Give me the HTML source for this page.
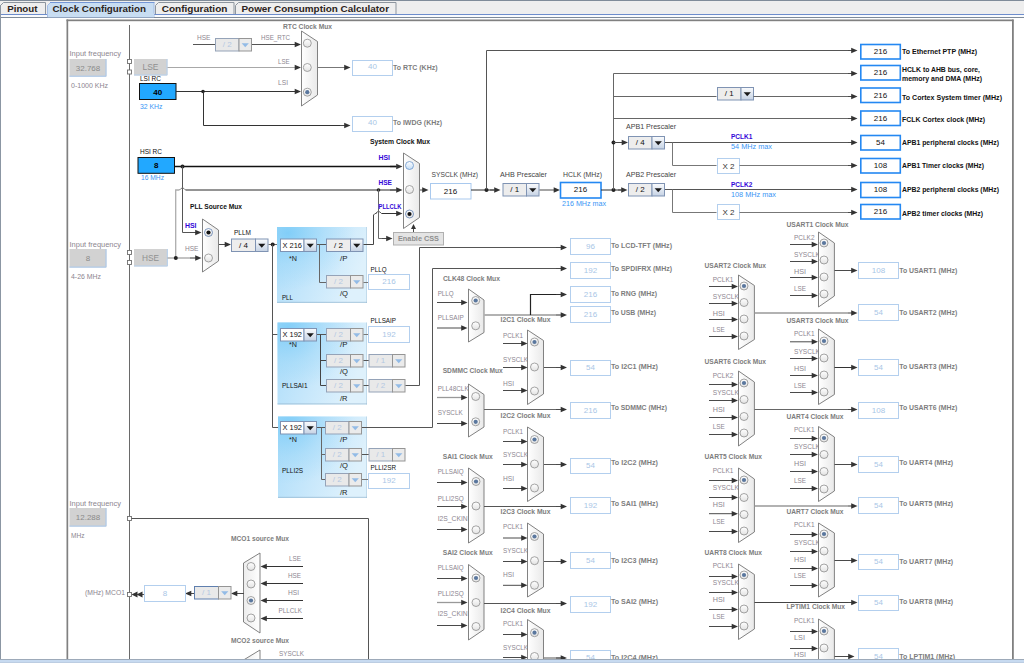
<!DOCTYPE html>
<html><head><meta charset="utf-8"><title>Clock Configuration</title>
<style>
html,body{margin:0;padding:0;background:#fff;overflow:hidden}
body{width:1024px;height:663px;font-family:"Liberation Sans",sans-serif}
svg{display:block;font-family:"Liberation Sans",sans-serif}
</style></head><body>
<svg width="1024" height="663" viewBox="0 0 1024 663">
<defs>
<linearGradient id="mg" x1="0" y1="0" x2="1" y2="0"><stop offset="0" stop-color="#ffffff"/><stop offset="1" stop-color="#e9e9e9"/></linearGradient>
<linearGradient id="mg2" x1="1" y1="0" x2="0" y2="0"><stop offset="0" stop-color="#ffffff"/><stop offset="1" stop-color="#ececec"/></linearGradient>
<linearGradient id="bg" x1="0" y1="0" x2="0" y2="1"><stop offset="0" stop-color="#fbfcfd"/><stop offset="1" stop-color="#c5d2e4"/></linearGradient>
<linearGradient id="rg" x1="0" y1="0" x2="0" y2="1"><stop offset="0" stop-color="#ffffff"/><stop offset="1" stop-color="#e2e2e2"/></linearGradient>
<linearGradient id="rgh" x1="0" y1="0" x2="0" y2="1"><stop offset="0" stop-color="#ffffff"/><stop offset="1" stop-color="#c2dcf6"/></linearGradient>
<linearGradient id="pg" x1="0" y1="0" x2="1" y2="0.35"><stop offset="0" stop-color="#aadcf9"/><stop offset="0.5" stop-color="#c4e6fb"/><stop offset="1" stop-color="#def1fc"/></linearGradient>
<radialGradient id="pr" cx="0.12" cy="0.08" r="0.75"><stop offset="0" stop-color="#7fcdf8" stop-opacity="0.95"/><stop offset="0.55" stop-color="#8fd3f8" stop-opacity="0.35"/><stop offset="1" stop-color="#8fd3f8" stop-opacity="0"/></radialGradient>
</defs>
<rect x="0" y="0" width="1024" height="663" fill="#fff" />
<rect x="0" y="0" width="1024" height="15" fill="#eeeeee" />
<rect x="0" y="0" width="1024" height="1" fill="#7f8b99" />
<rect x="0" y="14" width="1024" height="1" fill="#6d8dcc" />
<rect x="0" y="15" width="1024" height="2" fill="#f9fbfe" />
<rect x="0" y="17" width="1024" height="1" fill="#7f8b99" />
<path d="M0.5,14 L0.5,5.5 L3.5,2.5 L45.5,2.5 L45.5,14" fill="#eeeeee" stroke="#8d959e" stroke-width="1"/>
<text x="7.2" y="11.6" font-size="9.2" fill="#2b2320" font-weight="bold" textLength="30.3" lengthAdjust="spacingAndGlyphs" >Pinout</text>
<path d="M155.5,14 L155.5,5.5 L158.5,2.5 L234,2.5 L234,14" fill="#eeeeee" stroke="#8d959e" stroke-width="1"/>
<text x="161.7" y="11.6" font-size="9.2" fill="#2b2320" font-weight="bold" textLength="65.7" lengthAdjust="spacingAndGlyphs" >Configuration</text>
<path d="M235.5,14 L235.5,5.5 L238.5,2.5 L396,2.5 L396,14" fill="#eeeeee" stroke="#8d959e" stroke-width="1"/>
<text x="241.5" y="11.6" font-size="9.2" fill="#2b2320" font-weight="bold" textLength="147.5" lengthAdjust="spacingAndGlyphs" >Power Consumption Calculator</text>
<path d="M47.5,17 L47.5,5.5 L50.5,2.5 L154,2.5 L154,17 Z" fill="#c8ddf2" stroke="#a4bde6" stroke-width="1"/>
<rect x="48" y="13.5" width="106" height="3.5" fill="#c8ddf2" />
<rect x="50" y="2" width="104.5" height="1" fill="#7396d6" />
<text x="52.5" y="11.6" font-size="9.2" fill="#2b2320" font-weight="bold" textLength="93.5" lengthAdjust="spacingAndGlyphs" >Clock Configuration</text>
<rect x="0" y="5" width="1" height="658" fill="#8b96a3" />
<rect x="66.5" y="19.5" width="947" height="1.7" fill="#808080" />
<rect x="66.5" y="19.5" width="1.7" height="640" fill="#808080" />
<rect x="1012" y="19.5" width="1.8" height="640" fill="#808080" />
<rect x="0" y="659" width="1024" height="4" fill="#c7daf0" />
<rect x="0" y="659" width="1024" height="1" fill="#9daab9" />
<rect x="0" y="662" width="1024" height="1" fill="#bccde2" />
<polyline points="129.5,25 129.5,659" fill="none" stroke="#6a6a6a" stroke-width="1" />
<text x="69.5" y="55.5" font-size="8" fill="#8c8690" textLength="51.5" lengthAdjust="spacingAndGlyphs" >Input frequency</text>
<rect x="69.5" y="59" width="37" height="17.7" fill="#d2d2d2" />
<polyline points="106,59 106,76.2 69.5,76.2" fill="none" stroke="#a9c9ee" stroke-width="1" />
<text x="88" y="70.55" font-size="8" fill="#8a8a8a" text-anchor="middle" >32.768</text>
<text x="71" y="88" font-size="8" fill="#8c8690" textLength="37" lengthAdjust="spacingAndGlyphs" >0-1000 KHz</text>
<rect x="127.5" y="59.5" width="4" height="4" fill="#fff" stroke="#707070" stroke-width="0.9" />
<rect x="127.5" y="70" width="4" height="4" fill="#fff" stroke="#707070" stroke-width="0.9" />
<rect x="134" y="59" width="33.5" height="16.5" fill="#d2d2d2" />
<polyline points="167,59 167,75 134,75" fill="none" stroke="#b5d0ee" stroke-width="1" />
<text x="150.5" y="69.8" font-size="9.5" fill="#909090" text-anchor="middle" textLength="16" lengthAdjust="spacingAndGlyphs" >LSE</text>
<polyline points="167.5,67.5 296,67.5" fill="none" stroke="#a8a8a8" stroke-width="1" />
<text x="69.5" y="247" font-size="8" fill="#8c8690" textLength="51.5" lengthAdjust="spacingAndGlyphs" >Input frequency</text>
<rect x="69.5" y="249" width="37" height="18.6" fill="#d2d2d2" />
<polyline points="106,249 106,267.1 69.5,267.1" fill="none" stroke="#a9c9ee" stroke-width="1" />
<text x="88" y="261" font-size="8" fill="#8a8a8a" text-anchor="middle" >8</text>
<text x="71" y="279" font-size="8" fill="#8c8690" textLength="30" lengthAdjust="spacingAndGlyphs" >4-26 MHz</text>
<rect x="127.5" y="250.5" width="4" height="4" fill="#fff" stroke="#707070" stroke-width="0.9" />
<rect x="127.5" y="260.5" width="4" height="4" fill="#fff" stroke="#707070" stroke-width="0.9" />
<rect x="134" y="249" width="33.8" height="17.4" fill="#d2d2d2" />
<polyline points="167.3,249 167.3,266 134,266" fill="none" stroke="#b5d0ee" stroke-width="1" />
<text x="150.5" y="261" font-size="9.5" fill="#909090" text-anchor="middle" textLength="17" lengthAdjust="spacingAndGlyphs" >HSE</text>
<text x="69.5" y="505.5" font-size="8" fill="#8c8690" textLength="51.5" lengthAdjust="spacingAndGlyphs" >Input frequency</text>
<rect x="69.5" y="508" width="37" height="18.6" fill="#d2d2d2" />
<polyline points="106,508 106,526.1 69.5,526.1" fill="none" stroke="#a9c9ee" stroke-width="1" />
<text x="88" y="520" font-size="8" fill="#8a8a8a" text-anchor="middle" >12.288</text>
<text x="71" y="538" font-size="8" fill="#8c8690" textLength="13.5" lengthAdjust="spacingAndGlyphs" >MHz</text>
<rect x="127.5" y="516.5" width="4" height="4" fill="#fff" stroke="#707070" stroke-width="0.9" />
<text x="140" y="80.5" font-size="7.5" fill="#111" textLength="21" lengthAdjust="spacingAndGlyphs" >LSI RC</text>
<rect x="139.5" y="83.5" width="36.5" height="16" fill="#22a8ff" stroke="#111" stroke-width="1" />
<text x="157.75" y="94.5" font-size="8" fill="#000" font-weight="bold" text-anchor="middle" >40</text>
<text x="140" y="108.7" font-size="8" fill="#3a96f5" textLength="22.5" lengthAdjust="spacingAndGlyphs" >32 KHz</text>
<polyline points="176,91.5 296,91.5" fill="none" stroke="#333" stroke-width="1" />
<circle cx="203" cy="91.5" r="1.8" fill="#222"/>
<polyline points="203.5,91.5 203.5,125.5 345,125.5" fill="none" stroke="#333" stroke-width="1" />
<polyline points="340,125.5 346.5,125.5" fill="none" stroke="#4a4a4a" stroke-width="1" />
<polygon points="350.5,125.5 344.2,122.8 344.2,128.2" fill="#333"/>
<rect x="352.5" y="116.5" width="40" height="15" fill="#fff" stroke="#b3cfee" stroke-width="1" />
<text x="372.5" y="125.3" font-size="8" fill="#a9c6e6" text-anchor="middle" >40</text>
<text x="393" y="125.2" font-size="8" fill="#7d7d7d" font-weight="bold" textLength="49" lengthAdjust="spacingAndGlyphs" >To IWDG (KHz)</text>
<text x="197" y="39.5" font-size="8" fill="#8c8690" textLength="13.5" lengthAdjust="spacingAndGlyphs" >HSE</text>
<polyline points="193,44.5 215,44.5" fill="none" stroke="#555" stroke-width="1" />
<rect x="215.5" y="38.5" width="23.5" height="12.5" fill="#e9e9e9" stroke="#95a3b8" stroke-width="1" />
<rect x="239" y="38.5" width="12.5" height="12.5" fill="#ebebeb" stroke="#959595" stroke-width="1" />
<text x="227.25" y="47.05" font-size="8" fill="#b4c8e2" text-anchor="middle" >/ 2</text>
<polygon points="241.65,43.35 248.85,43.35 245.25,47.35" fill="#93bbe6"/>
<polyline points="252,44.5 296,44.5" fill="none" stroke="#555" stroke-width="1" />
<text x="261" y="39.5" font-size="8" fill="#8c8690" textLength="29" lengthAdjust="spacingAndGlyphs" >HSE_RTC</text>
<text x="278" y="63.5" font-size="8" fill="#8c8690" textLength="11.5" lengthAdjust="spacingAndGlyphs" >LSE</text>
<text x="278" y="84.5" font-size="8" fill="#8c8690" textLength="10" lengthAdjust="spacingAndGlyphs" >LSI</text>
<text x="283" y="28.5" font-size="8" fill="#7d7d7d" font-weight="bold" textLength="49" lengthAdjust="spacingAndGlyphs" >RTC Clock Mux</text>
<polyline points="290,44.5 297,44.5" fill="none" stroke="#4a4a4a" stroke-width="1" />
<polygon points="301,44.5 294.7,41.8 294.7,47.2" fill="#333"/>
<polyline points="290,67.5 297,67.5" fill="none" stroke="#a8a8a8" stroke-width="1" />
<polygon points="301,67.5 294.7,64.8 294.7,70.2" fill="#333"/>
<polyline points="290,91.5 297,91.5" fill="none" stroke="#333" stroke-width="1" />
<polygon points="301,91.5 294.7,88.8 294.7,94.2" fill="#333"/>
<polygon points="301.5,31 317.5,41.5 317.5,95 301.5,106" fill="url(#mg)" stroke="#747474" stroke-width="0.9"/>
<circle cx="307.3" cy="43.2" r="4" fill="url(#rg)" stroke="#8e8e8e" stroke-width="0.8"/>
<circle cx="307.3" cy="67.5" r="4" fill="url(#rg)" stroke="#8e8e8e" stroke-width="0.8"/>
<circle cx="307.3" cy="92.2" r="4" fill="url(#rg)" stroke="#8e8e8e" stroke-width="0.8"/>
<circle cx="307.3" cy="92.2" r="2.1" fill="#5a779e"/>
<polyline points="318,67.5 346.5,67.5" fill="none" stroke="#777" stroke-width="1" />
<polygon points="350.5,67.5 344.2,64.8 344.2,70.2" fill="#333"/>
<rect x="352.5" y="60.5" width="40" height="15" fill="#fff" stroke="#b3cfee" stroke-width="1" />
<text x="372.5" y="69.4" font-size="8" fill="#a9c6e6" text-anchor="middle" >40</text>
<text x="393" y="70" font-size="8" fill="#7d7d7d" font-weight="bold" textLength="44.5" lengthAdjust="spacingAndGlyphs" >To RTC (KHz)</text>
<text x="140" y="153.5" font-size="7.5" fill="#111" textLength="22" lengthAdjust="spacingAndGlyphs" >HSI RC</text>
<rect x="138" y="157.5" width="36.5" height="15.8" fill="#22a8ff" stroke="#111" stroke-width="1" />
<text x="156.25" y="168.4" font-size="8" fill="#000" font-weight="bold" text-anchor="middle" >8</text>
<text x="141" y="179.5" font-size="8" fill="#3a96f5" textLength="23" lengthAdjust="spacingAndGlyphs" >16 MHz</text>
<polyline points="175,166.5 396,166.5" fill="none" stroke="#111" stroke-width="1.3" />
<circle cx="182.5" cy="166.5" r="2" fill="#222"/>
<polyline points="390,166.5 398.5,166.5" fill="none" stroke="#111" stroke-width="1.3" />
<polygon points="402.5,166.5 396.2,163.8 396.2,169.2" fill="#333"/>
<polyline points="182.5,166.5 182.5,232.5 196,232.5" fill="none" stroke="#555" stroke-width="1" />
<polyline points="190,232.5 197.5,232.5" fill="none" stroke="#4a4a4a" stroke-width="1" />
<polygon points="201.5,232.5 195.2,229.8 195.2,235.2" fill="#333"/>
<polyline points="175.7,258 175.7,190 179.5,190" fill="none" stroke="#adadad" stroke-width="1.3" />
<path d="M179.5,190 Q182.5,186 185.5,190" fill="none" stroke="#777" stroke-width="1"/>
<polyline points="185.5,190 396,190" fill="none" stroke="#2a2a2a" stroke-width="1" />
<circle cx="378.5" cy="190" r="1.8" fill="#222"/>
<polyline points="390,190 398.5,190" fill="none" stroke="#4a4a4a" stroke-width="1" />
<polygon points="402.5,190 396.2,187.3 396.2,192.7" fill="#333"/>
<polyline points="167.5,258 196,258" fill="none" stroke="#aaa" stroke-width="1.4" />
<circle cx="175.8" cy="258" r="2" fill="#222"/>
<polyline points="190,258 197.5,258" fill="none" stroke="#888" stroke-width="1.4" />
<polygon points="201.5,258 195.2,255.3 195.2,260.7" fill="#333"/>
<text x="190" y="209" font-size="7.5" fill="#111" font-weight="bold" textLength="52" lengthAdjust="spacingAndGlyphs" >PLL Source Mux</text>
<text x="185" y="227.5" font-size="8" fill="#3306d8" font-weight="bold" textLength="11.5" lengthAdjust="spacingAndGlyphs" >HSI</text>
<text x="185" y="251" font-size="8" fill="#8c8690" textLength="13.5" lengthAdjust="spacingAndGlyphs" >HSE</text>
<polygon points="202.5,219 218.5,230 218.5,261 202.5,272" fill="url(#mg)" stroke="#747474" stroke-width="0.9"/>
<circle cx="208.5" cy="232.5" r="4" fill="url(#rg)" stroke="#5f7fae" stroke-width="0.8"/>
<circle cx="208.5" cy="232.5" r="2.1" fill="#111"/>
<circle cx="208.5" cy="258" r="4" fill="url(#rg)" stroke="#8e8e8e" stroke-width="0.8"/>
<polyline points="219,244.5 227,244.5" fill="none" stroke="#4a4a4a" stroke-width="1" />
<polygon points="231,244.5 224.7,241.8 224.7,247.2" fill="#333"/>
<text x="234" y="235" font-size="7.5" fill="#111" textLength="17" lengthAdjust="spacingAndGlyphs" >PLLM</text>
<rect x="231.5" y="239" width="24" height="12.5" fill="#ededed" stroke="#7f93b3" stroke-width="1" />
<rect x="255.5" y="239" width="12.5" height="12.5" fill="url(#bg)" stroke="#7f93b3" stroke-width="1" />
<text x="243.5" y="247.55" font-size="8" fill="#111" text-anchor="middle" >/ 4</text>
<polygon points="258.15,243.85 265.35,243.85 261.75,247.85" fill="#1a1a1a"/>
<polyline points="268.5,244.5 280,244.5" fill="none" stroke="#666" stroke-width="1" />
<circle cx="272.7" cy="244.5" r="2" fill="#222"/>
<polyline points="272.5,244.5 272.5,427.5 280,427.5" fill="none" stroke="#555" stroke-width="1" />
<polyline points="272.5,334.5 280,334.5" fill="none" stroke="#555" stroke-width="1" />
<rect x="277" y="227" width="90" height="76" fill="url(#pg)" />
<rect x="277" y="227" width="90" height="76" fill="url(#pr)" />
<rect x="277" y="301.8" width="90" height="1.2" fill="#8fb3cc" opacity="0.55"/>
<rect x="366" y="227" width="1" height="76" fill="#8fb3cc" opacity="0.35"/>
<rect x="280.5" y="239" width="23.5" height="12.5" fill="#ffffff" stroke="#7f93b3" stroke-width="1" />
<rect x="304" y="239" width="12.5" height="12.5" fill="url(#bg)" stroke="#7f93b3" stroke-width="1" />
<text x="292.25" y="247.55" font-size="8" fill="#111" text-anchor="middle" textLength="19.5" lengthAdjust="spacingAndGlyphs" >X 216</text>
<polygon points="306.65,243.85 313.85,243.85 310.25,247.85" fill="#1a1a1a"/>
<polyline points="317,244.5 326,244.5" fill="none" stroke="#555" stroke-width="1" />
<rect x="326.5" y="239" width="24" height="12.5" fill="#ededed" stroke="#7f93b3" stroke-width="1" />
<rect x="350.5" y="239" width="12.5" height="12.5" fill="url(#bg)" stroke="#7f93b3" stroke-width="1" />
<text x="338.5" y="247.55" font-size="8" fill="#111" text-anchor="middle" >/ 2</text>
<polygon points="353.15,243.85 360.35,243.85 356.75,247.85" fill="#1a1a1a"/>
<polyline points="319.5,244.5 319.5,282.5 326,282.5" fill="none" stroke="#666" stroke-width="1" />
<rect x="326.5" y="275.5" width="24" height="12.5" fill="#e9e9e9" stroke="#95a3b8" stroke-width="1" />
<rect x="350.5" y="275.5" width="12.5" height="12.5" fill="#ebebeb" stroke="#959595" stroke-width="1" />
<text x="338.5" y="284.05" font-size="8" fill="#b4c8e2" text-anchor="middle" >/ 2</text>
<polygon points="353.15,280.35 360.35,280.35 356.75,284.35" fill="#93bbe6"/>
<polyline points="363.5,282.5 369,282.5" fill="none" stroke="#777" stroke-width="1" />
<text x="289" y="260.5" font-size="7" fill="#222" textLength="8" lengthAdjust="spacingAndGlyphs" >*N</text>
<text x="340" y="260.5" font-size="7" fill="#222" textLength="7.5" lengthAdjust="spacingAndGlyphs" >/P</text>
<text x="340" y="296" font-size="7" fill="#222" textLength="8" lengthAdjust="spacingAndGlyphs" >/Q</text>
<text x="282" y="300" font-size="7.5" fill="#111" textLength="11" lengthAdjust="spacingAndGlyphs" >PLL</text>
<text x="370.5" y="272" font-size="7.5" fill="#111" textLength="16" lengthAdjust="spacingAndGlyphs" >PLLQ</text>
<rect x="368.5" y="274.5" width="41" height="15" fill="#fff" stroke="#b3cfee" stroke-width="1" />
<text x="389" y="284.2" font-size="8" fill="#a9c6e6" text-anchor="middle" >216</text>
<polyline points="363.5,244.5 373.5,244.5 373.5,215 375,213.5 376.5,213.5" fill="none" stroke="#444" stroke-width="1" />
<path d="M375.5,213.5 Q378.5,209.5 381.5,213.5" fill="none" stroke="#666" stroke-width="1"/>
<polyline points="381.5,213.5 396,213.5" fill="none" stroke="#333" stroke-width="1" />
<polyline points="390,213.5 398.5,213.5" fill="none" stroke="#333" stroke-width="1" />
<polygon points="402.5,213.5 396.2,210.8 396.2,216.2" fill="#333"/>
<polyline points="378.5,189.5 378.5,238.5 386,238.5" fill="none" stroke="#666" stroke-width="1" />
<polyline points="382,238.5 388.5,238.5" fill="none" stroke="#4a4a4a" stroke-width="1" />
<polygon points="392.5,238.5 386.2,235.8 386.2,241.2" fill="#333"/>
<rect x="393.5" y="232.5" width="50" height="12.5" fill="#e4e4e4" stroke="#b0b0b0" stroke-width="1" />
<text x="418.5" y="241" font-size="8" fill="#8e8e8e" font-weight="bold" text-anchor="middle" textLength="41" lengthAdjust="spacingAndGlyphs" >Enable CSS</text>
<polyline points="413.5,232 413.5,227" fill="none" stroke="#4a4a4a" stroke-width="1" />
<polygon points="413.5,224 411,229 416,229" fill="#333"/>
<rect x="277.5" y="322.5" width="89.5" height="82" fill="url(#pg)" />
<rect x="277.5" y="322.5" width="89.5" height="82" fill="url(#pr)" />
<rect x="277.5" y="403.3" width="89.5" height="1.2" fill="#8fb3cc" opacity="0.55"/>
<rect x="366" y="322.5" width="1" height="82" fill="#8fb3cc" opacity="0.35"/>
<rect x="280.5" y="328.5" width="23.5" height="12.5" fill="#ffffff" stroke="#7f93b3" stroke-width="1" />
<rect x="304" y="328.5" width="12.5" height="12.5" fill="url(#bg)" stroke="#7f93b3" stroke-width="1" />
<text x="292.25" y="337.05" font-size="8" fill="#111" text-anchor="middle" textLength="19.5" lengthAdjust="spacingAndGlyphs" >X 192</text>
<polygon points="306.65,333.35 313.85,333.35 310.25,337.35" fill="#1a1a1a"/>
<polyline points="317,334.5 326,334.5" fill="none" stroke="#555" stroke-width="1" />
<rect x="326.5" y="328.5" width="24" height="12.5" fill="#e9e9e9" stroke="#95a3b8" stroke-width="1" />
<rect x="350.5" y="328.5" width="12.5" height="12.5" fill="#ebebeb" stroke="#959595" stroke-width="1" />
<text x="338.5" y="337.05" font-size="8" fill="#b4c8e2" text-anchor="middle" >/ 2</text>
<polygon points="353.15,333.35 360.35,333.35 356.75,337.35" fill="#93bbe6"/>
<polyline points="363.5,334.5 369,334.5" fill="none" stroke="#777" stroke-width="1" />
<text x="370.5" y="323" font-size="7.5" fill="#111" textLength="25.5" lengthAdjust="spacingAndGlyphs" >PLLSAIP</text>
<rect x="368.5" y="326.5" width="41" height="16" fill="#fff" stroke="#b3cfee" stroke-width="1" />
<text x="389" y="336.7" font-size="8" fill="#a9c6e6" text-anchor="middle" >192</text>
<polyline points="320.5,334.5 320.5,385.5 326,385.5" fill="none" stroke="#444" stroke-width="1" />
<polyline points="320.5,360.5 326,360.5" fill="none" stroke="#444" stroke-width="1" />
<rect x="326.5" y="354.5" width="24" height="12.5" fill="#e9e9e9" stroke="#95a3b8" stroke-width="1" />
<rect x="350.5" y="354.5" width="12.5" height="12.5" fill="#ebebeb" stroke="#959595" stroke-width="1" />
<text x="338.5" y="363.05" font-size="8" fill="#b4c8e2" text-anchor="middle" >/ 2</text>
<polygon points="353.15,359.35 360.35,359.35 356.75,363.35" fill="#93bbe6"/>
<polyline points="363.5,360.5 369,360.5" fill="none" stroke="#555" stroke-width="1" />
<rect x="369" y="354.5" width="23.5" height="12.5" fill="#e9e9e9" stroke="#95a3b8" stroke-width="1" />
<rect x="392.5" y="354.5" width="12.5" height="12.5" fill="#ebebeb" stroke="#959595" stroke-width="1" />
<text x="380.75" y="363.05" font-size="8" fill="#b4c8e2" text-anchor="middle" >/ 1</text>
<polygon points="395.15,359.35 402.35,359.35 398.75,363.35" fill="#93bbe6"/>
<rect x="326.5" y="379.5" width="24" height="12.5" fill="#e9e9e9" stroke="#95a3b8" stroke-width="1" />
<rect x="350.5" y="379.5" width="12.5" height="12.5" fill="#ebebeb" stroke="#959595" stroke-width="1" />
<text x="338.5" y="388.05" font-size="8" fill="#b4c8e2" text-anchor="middle" >/ 2</text>
<polygon points="353.15,384.35 360.35,384.35 356.75,388.35" fill="#93bbe6"/>
<polyline points="363.5,385.5 369,385.5" fill="none" stroke="#555" stroke-width="1" />
<rect x="369" y="379.5" width="23.5" height="12.5" fill="#e9e9e9" stroke="#95a3b8" stroke-width="1" />
<rect x="392.5" y="379.5" width="12.5" height="12.5" fill="#ebebeb" stroke="#959595" stroke-width="1" />
<text x="380.75" y="388.05" font-size="8" fill="#b4c8e2" text-anchor="middle" >/ 2</text>
<polygon points="395.15,384.35 402.35,384.35 398.75,388.35" fill="#93bbe6"/>
<text x="289" y="347" font-size="7" fill="#222" textLength="8" lengthAdjust="spacingAndGlyphs" >*N</text>
<text x="340" y="347" font-size="7" fill="#222" textLength="7.5" lengthAdjust="spacingAndGlyphs" >/P</text>
<text x="340" y="374" font-size="7" fill="#222" textLength="8" lengthAdjust="spacingAndGlyphs" >/Q</text>
<text x="340" y="401" font-size="7" fill="#222" textLength="7.5" lengthAdjust="spacingAndGlyphs" >/R</text>
<text x="282" y="387.5" font-size="7.5" fill="#111" textLength="25.5" lengthAdjust="spacingAndGlyphs" >PLLSAI1</text>
<polyline points="405.5,385.5 419.5,385.5 419.5,247.5 562,247.5" fill="none" stroke="#555" stroke-width="1" />
<polyline points="556,247.5 563,247.5" fill="none" stroke="#4a4a4a" stroke-width="1" />
<polygon points="567,247.5 560.7,244.8 560.7,250.2" fill="#333"/>
<rect x="570.5" y="238.5" width="40" height="16" fill="#fff" stroke="#b3cfee" stroke-width="1" />
<text x="590.5" y="248.7" font-size="8" fill="#a9c6e6" text-anchor="middle" >96</text>
<text x="611" y="247.5" font-size="8" fill="#7d7d7d" font-weight="bold" textLength="61" lengthAdjust="spacingAndGlyphs" >To LCD-TFT (MHz)</text>
<rect x="278" y="416.5" width="89" height="81.5" fill="url(#pg)" />
<rect x="278" y="416.5" width="89" height="81.5" fill="url(#pr)" />
<rect x="278" y="496.8" width="89" height="1.2" fill="#8fb3cc" opacity="0.55"/>
<rect x="366" y="416.5" width="1" height="81.5" fill="#8fb3cc" opacity="0.35"/>
<rect x="280.5" y="421.5" width="23.5" height="12.5" fill="#ffffff" stroke="#7f93b3" stroke-width="1" />
<rect x="304" y="421.5" width="12.5" height="12.5" fill="url(#bg)" stroke="#7f93b3" stroke-width="1" />
<text x="292.25" y="430.05" font-size="8" fill="#111" text-anchor="middle" textLength="19.5" lengthAdjust="spacingAndGlyphs" >X 192</text>
<polygon points="306.65,426.35 313.85,426.35 310.25,430.35" fill="#1a1a1a"/>
<polyline points="317,427.5 325,427.5" fill="none" stroke="#555" stroke-width="1" />
<rect x="325.5" y="421.5" width="23.5" height="12.5" fill="#e9e9e9" stroke="#95a3b8" stroke-width="1" />
<rect x="349" y="421.5" width="12.5" height="12.5" fill="#ebebeb" stroke="#959595" stroke-width="1" />
<text x="337.25" y="430.05" font-size="8" fill="#b4c8e2" text-anchor="middle" >/ 2</text>
<polygon points="351.65,426.35 358.85,426.35 355.25,430.35" fill="#93bbe6"/>
<polyline points="321.5,427.5 321.5,479.5 325,479.5" fill="none" stroke="#666" stroke-width="1" />
<polyline points="321.5,454.5 325,454.5" fill="none" stroke="#666" stroke-width="1" />
<rect x="325.5" y="448.5" width="23.5" height="12.5" fill="#e9e9e9" stroke="#95a3b8" stroke-width="1" />
<rect x="349" y="448.5" width="12.5" height="12.5" fill="#ebebeb" stroke="#959595" stroke-width="1" />
<text x="337.25" y="457.05" font-size="8" fill="#b4c8e2" text-anchor="middle" >/ 2</text>
<polygon points="351.65,453.35 358.85,453.35 355.25,457.35" fill="#93bbe6"/>
<polyline points="362,454.5 369,454.5" fill="none" stroke="#555" stroke-width="1" />
<rect x="369" y="448.5" width="23.5" height="12.5" fill="#e9e9e9" stroke="#95a3b8" stroke-width="1" />
<rect x="392.5" y="448.5" width="12.5" height="12.5" fill="#ebebeb" stroke="#959595" stroke-width="1" />
<text x="380.75" y="457.05" font-size="8" fill="#b4c8e2" text-anchor="middle" >/ 1</text>
<polygon points="395.15,453.35 402.35,453.35 398.75,457.35" fill="#93bbe6"/>
<rect x="325.5" y="473.5" width="23.5" height="12.5" fill="#e9e9e9" stroke="#95a3b8" stroke-width="1" />
<rect x="349" y="473.5" width="12.5" height="12.5" fill="#ebebeb" stroke="#959595" stroke-width="1" />
<text x="337.25" y="482.05" font-size="8" fill="#b4c8e2" text-anchor="middle" >/ 2</text>
<polygon points="351.65,478.35 358.85,478.35 355.25,482.35" fill="#93bbe6"/>
<polyline points="362,479.5 369,479.5" fill="none" stroke="#777" stroke-width="1" />
<rect x="368.5" y="473.5" width="41" height="15" fill="#fff" stroke="#b3cfee" stroke-width="1" />
<text x="389" y="483.2" font-size="8" fill="#a9c6e6" text-anchor="middle" >192</text>
<text x="370.5" y="469.5" font-size="7.5" fill="#111" textLength="25.5" lengthAdjust="spacingAndGlyphs" >PLLI2SR</text>
<text x="289" y="442" font-size="7" fill="#222" textLength="8" lengthAdjust="spacingAndGlyphs" >*N</text>
<text x="340" y="442" font-size="7" fill="#222" textLength="7.5" lengthAdjust="spacingAndGlyphs" >/P</text>
<text x="340" y="468" font-size="7" fill="#222" textLength="8" lengthAdjust="spacingAndGlyphs" >/Q</text>
<text x="340" y="495" font-size="7" fill="#222" textLength="7.5" lengthAdjust="spacingAndGlyphs" >/R</text>
<text x="282" y="473" font-size="7.5" fill="#111" textLength="21" lengthAdjust="spacingAndGlyphs" >PLLI2S</text>
<polyline points="362,427.5 432.5,427.5 432.5,268.5 562,268.5" fill="none" stroke="#555" stroke-width="1" />
<polyline points="556,268.5 563,268.5" fill="none" stroke="#4a4a4a" stroke-width="1" />
<polygon points="567,268.5 560.7,265.8 560.7,271.2" fill="#333"/>
<rect x="570.5" y="262.5" width="40" height="16" fill="#fff" stroke="#b3cfee" stroke-width="1" />
<text x="590.5" y="272.7" font-size="8" fill="#a9c6e6" text-anchor="middle" >192</text>
<text x="611" y="270.5" font-size="8" fill="#7d7d7d" font-weight="bold" textLength="61" lengthAdjust="spacingAndGlyphs" >To SPDIFRX (MHz)</text>
<text x="370" y="144" font-size="7.5" fill="#111" font-weight="bold" textLength="60" lengthAdjust="spacingAndGlyphs" >System Clock Mux</text>
<text x="378.5" y="160" font-size="8" fill="#3306d8" font-weight="bold" textLength="11.5" lengthAdjust="spacingAndGlyphs" >HSI</text>
<text x="378.5" y="184.5" font-size="8" fill="#3306d8" font-weight="bold" textLength="13.5" lengthAdjust="spacingAndGlyphs" >HSE</text>
<text x="378.5" y="208.5" font-size="8" fill="#3306d8" font-weight="bold" textLength="23" lengthAdjust="spacingAndGlyphs" >PLLCLK</text>
<polygon points="403.5,153 419.5,163.5 419.5,217.5 403.5,228.5" fill="url(#mg)" stroke="#747474" stroke-width="0.9"/>
<circle cx="409.5" cy="165.5" r="4" fill="url(#rgh)" stroke="#6a96cc" stroke-width="0.8"/>
<circle cx="409.5" cy="189.5" r="4" fill="url(#rg)" stroke="#8e8e8e" stroke-width="0.8"/>
<circle cx="409.5" cy="214" r="4" fill="url(#rg)" stroke="#5f7fae" stroke-width="0.8"/>
<circle cx="409.5" cy="214" r="2.1" fill="#111"/>
<polyline points="420,190 424.5,190" fill="none" stroke="#4a4a4a" stroke-width="1" />
<polygon points="428.5,190 422.2,187.3 422.2,192.7" fill="#333"/>
<text x="431.5" y="176.5" font-size="8" fill="#444" textLength="46.5" lengthAdjust="spacingAndGlyphs" >SYSCLK (MHz)</text>
<rect x="430.5" y="183.5" width="40.5" height="15.5" fill="#fff" stroke="#a9c9ee" stroke-width="1" />
<text x="450.5" y="193.5" font-size="8" fill="#111" text-anchor="middle" >216</text>
<polyline points="471,190 494,190" fill="none" stroke="#2a2a2a" stroke-width="1" />
<circle cx="486.5" cy="190" r="2" fill="#222"/>
<polyline points="490,190 496.5,190" fill="none" stroke="#4a4a4a" stroke-width="1" />
<polygon points="500.5,190 494.2,187.3 494.2,192.7" fill="#333"/>
<text x="500" y="176.5" font-size="8" fill="#444" textLength="47" lengthAdjust="spacingAndGlyphs" >AHB Prescaler</text>
<rect x="503" y="183.5" width="23.5" height="12.5" fill="#ededed" stroke="#7f93b3" stroke-width="1" />
<rect x="526.5" y="183.5" width="12.5" height="12.5" fill="url(#bg)" stroke="#7f93b3" stroke-width="1" />
<text x="514.75" y="192.05" font-size="8" fill="#111" text-anchor="middle" >/ 1</text>
<polygon points="529.15,188.35 536.35,188.35 532.75,192.35" fill="#1a1a1a"/>
<polyline points="539.5,190 556,190" fill="none" stroke="#4a4a4a" stroke-width="1" />
<polygon points="560,190 553.7,187.3 553.7,192.7" fill="#333"/>
<text x="563" y="176.5" font-size="8" fill="#444" textLength="39" lengthAdjust="spacingAndGlyphs" >HCLK (MHz)</text>
<rect x="560.5" y="182.5" width="40.5" height="15.5" fill="#fff" stroke="#2488f2" stroke-width="1.6" />
<text x="580.5" y="192.3" font-size="8" fill="#111" text-anchor="middle" >216</text>
<text x="562" y="205.5" font-size="8" fill="#3a96f5" textLength="44" lengthAdjust="spacingAndGlyphs" >216 MHz max</text>
<polyline points="601,190 621,190" fill="none" stroke="#2a2a2a" stroke-width="1" />
<circle cx="613.5" cy="190" r="2" fill="#222"/>
<polyline points="618,190 623.5,190" fill="none" stroke="#4a4a4a" stroke-width="1" />
<polygon points="627.5,190 621.2,187.3 621.2,192.7" fill="#333"/>
<polyline points="486.5,189.5 486.5,50.5 852,50.5" fill="none" stroke="#555" stroke-width="1" />
<polyline points="848,50.5 853.5,50.5" fill="none" stroke="#4a4a4a" stroke-width="1" />
<polygon points="857.5,50.5 851.2,47.8 851.2,53.2" fill="#333"/>
<polyline points="613.5,189.5 613.5,73.5 852,73.5" fill="none" stroke="#666" stroke-width="1" />
<polyline points="848,73.5 853.5,73.5" fill="none" stroke="#4a4a4a" stroke-width="1" />
<polygon points="857.5,73.5 851.2,70.8 851.2,76.2" fill="#333"/>
<polyline points="613.5,96.5 716.5,96.5" fill="none" stroke="#666" stroke-width="1" />
<rect x="717.5" y="87.5" width="23.5" height="12.5" fill="#ededed" stroke="#7f93b3" stroke-width="1" />
<rect x="741" y="87.5" width="12.5" height="12.5" fill="url(#bg)" stroke="#7f93b3" stroke-width="1" />
<text x="729.25" y="96.05" font-size="8" fill="#111" text-anchor="middle" >/ 1</text>
<polygon points="743.65,92.35 750.85,92.35 747.25,96.35" fill="#1a1a1a"/>
<polyline points="753.5,96.5 852,96.5" fill="none" stroke="#666" stroke-width="1" />
<polyline points="848,96.5 853.5,96.5" fill="none" stroke="#4a4a4a" stroke-width="1" />
<polygon points="857.5,96.5 851.2,93.8 851.2,99.2" fill="#333"/>
<polyline points="613.5,118.5 852,118.5" fill="none" stroke="#666" stroke-width="1" />
<polyline points="848,118.5 853.5,118.5" fill="none" stroke="#4a4a4a" stroke-width="1" />
<polygon points="857.5,118.5 851.2,115.8 851.2,121.2" fill="#333"/>
<text x="626" y="128.5" font-size="8" fill="#444" textLength="50" lengthAdjust="spacingAndGlyphs" >APB1 Prescaler</text>
<circle cx="613.5" cy="142.5" r="2" fill="#222"/>
<polyline points="613.5,142.5 624,142.5" fill="none" stroke="#4a4a4a" stroke-width="1" />
<polygon points="628,142.5 621.7,139.8 621.7,145.2" fill="#333"/>
<rect x="628.5" y="136.5" width="23.5" height="12.5" fill="#ededed" stroke="#7f93b3" stroke-width="1" />
<rect x="652" y="136.5" width="12.5" height="12.5" fill="url(#bg)" stroke="#7f93b3" stroke-width="1" />
<text x="640.25" y="145.05" font-size="8" fill="#111" text-anchor="middle" >/ 4</text>
<polygon points="654.65,141.35 661.85,141.35 658.25,145.35" fill="#1a1a1a"/>
<polyline points="665,142.5 852,142.5" fill="none" stroke="#555" stroke-width="1" />
<polyline points="848,142.5 853.5,142.5" fill="none" stroke="#4a4a4a" stroke-width="1" />
<polygon points="857.5,142.5 851.2,139.8 851.2,145.2" fill="#333"/>
<text x="731" y="138.5" font-size="8" fill="#3306d8" font-weight="bold" textLength="21.5" lengthAdjust="spacingAndGlyphs" >PCLK1</text>
<text x="731" y="149" font-size="8" fill="#3a96f5" textLength="41" lengthAdjust="spacingAndGlyphs" >54 MHz max</text>
<polyline points="672.5,142.5 672.5,165.5 716.5,165.5" fill="none" stroke="#777" stroke-width="1" />
<rect x="717.5" y="158.5" width="22" height="15" fill="#fff" stroke="#b3cfee" stroke-width="1" />
<text x="728.5" y="168.5" font-size="8" fill="#333" text-anchor="middle" >X 2</text>
<polyline points="739.5,165.5 852,165.5" fill="none" stroke="#777" stroke-width="1" />
<polyline points="848,165.5 853.5,165.5" fill="none" stroke="#4a4a4a" stroke-width="1" />
<polygon points="857.5,165.5 851.2,162.8 851.2,168.2" fill="#333"/>
<text x="626" y="176.5" font-size="8" fill="#444" textLength="50" lengthAdjust="spacingAndGlyphs" >APB2 Prescaler</text>
<rect x="628.5" y="183.5" width="23.5" height="12.5" fill="#ededed" stroke="#7f93b3" stroke-width="1" />
<rect x="652" y="183.5" width="12.5" height="12.5" fill="url(#bg)" stroke="#7f93b3" stroke-width="1" />
<text x="640.25" y="192.05" font-size="8" fill="#111" text-anchor="middle" >/ 2</text>
<polygon points="654.65,188.35 661.85,188.35 658.25,192.35" fill="#1a1a1a"/>
<polyline points="665,189.5 852,189.5" fill="none" stroke="#555" stroke-width="1" />
<polyline points="848,189.5 853.5,189.5" fill="none" stroke="#4a4a4a" stroke-width="1" />
<polygon points="857.5,189.5 851.2,186.8 851.2,192.2" fill="#333"/>
<text x="731" y="186.5" font-size="8" fill="#3306d8" font-weight="bold" textLength="21.5" lengthAdjust="spacingAndGlyphs" >PCLK2</text>
<text x="731" y="197" font-size="8" fill="#3a96f5" textLength="45" lengthAdjust="spacingAndGlyphs" >108 MHz max</text>
<polyline points="672.5,189.5 672.5,212.5 716.5,212.5" fill="none" stroke="#777" stroke-width="1" />
<rect x="717.5" y="204.5" width="22" height="15" fill="#fff" stroke="#b3cfee" stroke-width="1" />
<text x="728.5" y="214.5" font-size="8" fill="#333" text-anchor="middle" >X 2</text>
<polyline points="739.5,212.5 852,212.5" fill="none" stroke="#777" stroke-width="1" />
<polyline points="848,212.5 853.5,212.5" fill="none" stroke="#4a4a4a" stroke-width="1" />
<polygon points="857.5,212.5 851.2,209.8 851.2,215.2" fill="#333"/>
<rect x="860.8" y="44.5" width="39.5" height="14.5" fill="#fff" stroke="#2488f2" stroke-width="1.6" />
<text x="880.55" y="53.75" font-size="8" fill="#111" text-anchor="middle" >216</text>
<text x="902" y="54.1" font-size="7.6" fill="#111" font-weight="bold" textLength="75" lengthAdjust="spacingAndGlyphs" >To Ethernet PTP (MHz)</text>
<rect x="860.8" y="65.5" width="39.5" height="14.5" fill="#fff" stroke="#2488f2" stroke-width="1.6" />
<text x="880.55" y="74.75" font-size="8" fill="#111" text-anchor="middle" >216</text>
<text x="902" y="72.4" font-size="7.6" fill="#111" font-weight="bold" textLength="78" lengthAdjust="spacingAndGlyphs" >HCLK to AHB bus, core,</text>
<text x="902" y="80.6" font-size="7.6" fill="#111" font-weight="bold" textLength="80" lengthAdjust="spacingAndGlyphs" >memory and DMA (MHz)</text>
<rect x="860.8" y="88" width="39.5" height="14.5" fill="#fff" stroke="#2488f2" stroke-width="1.6" />
<text x="880.55" y="98.15" font-size="8" fill="#111" text-anchor="middle" >216</text>
<text x="902" y="99.6" font-size="7.6" fill="#111" font-weight="bold" textLength="100" lengthAdjust="spacingAndGlyphs" >To Cortex System timer (MHz)</text>
<rect x="860.8" y="111" width="39.5" height="14.5" fill="#fff" stroke="#2488f2" stroke-width="1.6" />
<text x="880.55" y="121.25" font-size="8" fill="#111" text-anchor="middle" >216</text>
<text x="902" y="121.9" font-size="7.6" fill="#111" font-weight="bold" textLength="83" lengthAdjust="spacingAndGlyphs" >FCLK Cortex clock (MHz)</text>
<rect x="860.8" y="135.5" width="39.5" height="14.5" fill="#fff" stroke="#2488f2" stroke-width="1.6" />
<text x="880.55" y="144.75" font-size="8" fill="#111" text-anchor="middle" >54</text>
<text x="902" y="145.4" font-size="7.6" fill="#111" font-weight="bold" textLength="97" lengthAdjust="spacingAndGlyphs" >APB1 peripheral clocks (MHz)</text>
<rect x="860.8" y="158.5" width="39.5" height="14.5" fill="#fff" stroke="#2488f2" stroke-width="1.6" />
<text x="880.55" y="167.75" font-size="8" fill="#111" text-anchor="middle" >108</text>
<text x="902" y="168.1" font-size="7.6" fill="#111" font-weight="bold" textLength="82" lengthAdjust="spacingAndGlyphs" >APB1 Timer clocks (MHz)</text>
<rect x="860.8" y="182.5" width="39.5" height="15" fill="#fff" stroke="#2488f2" stroke-width="1.6" />
<text x="880.55" y="192" font-size="8" fill="#111" text-anchor="middle" >108</text>
<text x="902" y="191.8" font-size="7.6" fill="#111" font-weight="bold" textLength="97" lengthAdjust="spacingAndGlyphs" >APB2 peripheral clocks (MHz)</text>
<rect x="860.8" y="204.5" width="39.5" height="14.5" fill="#fff" stroke="#2488f2" stroke-width="1.6" />
<text x="880.55" y="213.75" font-size="8" fill="#111" text-anchor="middle" >216</text>
<text x="902" y="216.1" font-size="7.6" fill="#111" font-weight="bold" textLength="81" lengthAdjust="spacingAndGlyphs" >APB2 timer clocks (MHz)</text>
<text x="443" y="281.4" font-size="8" fill="#7d7d7d" font-weight="bold" textLength="57" lengthAdjust="spacingAndGlyphs" >CLK48 Clock Mux</text>
<text x="437.7" y="295.5" font-size="8" fill="#8c8690" textLength="16" lengthAdjust="spacingAndGlyphs" >PLLQ</text>
<text x="437.7" y="319.5" font-size="8" fill="#8c8690" textLength="26" lengthAdjust="spacingAndGlyphs" >PLLSAIP</text>
<polyline points="437,302.5 463.5,302.5" fill="none" stroke="#4a4a4a" stroke-width="1" />
<polygon points="467.5,302.5 461.2,299.8 461.2,305.2" fill="#333"/>
<polyline points="437,328 463.5,328" fill="none" stroke="#4a4a4a" stroke-width="1" />
<polygon points="467.5,328 461.2,325.3 461.2,330.7" fill="#333"/>
<polygon points="468.5,289 484,300 484,332.5 468.5,342" fill="url(#mg)" stroke="#747474" stroke-width="0.9"/>
<circle cx="475.7" cy="300.5" r="4" fill="url(#rg)" stroke="#8e8e8e" stroke-width="0.8"/>
<circle cx="475.7" cy="300.5" r="2.1" fill="#5a779e"/>
<circle cx="475.7" cy="325.8" r="4" fill="url(#rg)" stroke="#8e8e8e" stroke-width="0.8"/>
<polyline points="484.5,315 562,315" fill="none" stroke="#999" stroke-width="1.3" />
<polyline points="556,315 563,315" fill="none" stroke="#777" stroke-width="1" />
<polygon points="567,315 560.7,312.3 560.7,317.7" fill="#333"/>
<polyline points="530.5,315 530.5,294.5 562,294.5" fill="none" stroke="#222" stroke-width="1.2" />
<polyline points="556,294.5 563,294.5" fill="none" stroke="#333" stroke-width="1" />
<polygon points="567,294.5 560.7,291.8 560.7,297.2" fill="#333"/>
<rect x="570.5" y="286.5" width="40" height="16" fill="#fff" stroke="#b3cfee" stroke-width="1" />
<text x="590.5" y="296.7" font-size="8" fill="#a9c6e6" text-anchor="middle" >216</text>
<text x="611" y="295.9" font-size="8" fill="#7d7d7d" font-weight="bold" textLength="46" lengthAdjust="spacingAndGlyphs" >To RNG (MHz)</text>
<rect x="570.5" y="306.5" width="40" height="16" fill="#fff" stroke="#b3cfee" stroke-width="1" />
<text x="590.5" y="316.7" font-size="8" fill="#a9c6e6" text-anchor="middle" >216</text>
<text x="611" y="314.6" font-size="8" fill="#7d7d7d" font-weight="bold" textLength="45" lengthAdjust="spacingAndGlyphs" >To USB (MHz)</text>
<text x="442.7" y="373.4" font-size="8" fill="#7d7d7d" font-weight="bold" textLength="60" lengthAdjust="spacingAndGlyphs" >SDMMC Clock Mux</text>
<text x="437.7" y="390.5" font-size="8" fill="#8c8690" textLength="31" lengthAdjust="spacingAndGlyphs" >PLL48CLK</text>
<text x="437.7" y="414.5" font-size="8" fill="#8c8690" textLength="25" lengthAdjust="spacingAndGlyphs" >SYSCLK</text>
<polyline points="437,397.5 463.5,397.5" fill="none" stroke="#999" stroke-width="1.3" />
<polygon points="467.5,397.5 461.2,394.8 461.2,400.2" fill="#333"/>
<polyline points="437,423.5 463.5,423.5" fill="none" stroke="#4a4a4a" stroke-width="1" />
<polygon points="467.5,423.5 461.2,420.8 461.2,426.2" fill="#333"/>
<polygon points="468.5,384 484,394.5 484,427 468.5,437" fill="url(#mg)" stroke="#747474" stroke-width="0.9"/>
<circle cx="475.7" cy="396.5" r="4" fill="url(#rg)" stroke="#8e8e8e" stroke-width="0.8"/>
<circle cx="475.7" cy="421.8" r="4" fill="url(#rg)" stroke="#8e8e8e" stroke-width="0.8"/>
<circle cx="475.7" cy="421.8" r="2.1" fill="#5a779e"/>
<polyline points="484,409.5 562,409.5" fill="none" stroke="#666" stroke-width="1" />
<polyline points="556,409.5 563,409.5" fill="none" stroke="#4a4a4a" stroke-width="1" />
<polygon points="567,409.5 560.7,406.8 560.7,412.2" fill="#333"/>
<rect x="570.5" y="402.5" width="40" height="16" fill="#fff" stroke="#b3cfee" stroke-width="1" />
<text x="590.5" y="412.7" font-size="8" fill="#a9c6e6" text-anchor="middle" >216</text>
<text x="611" y="410" font-size="8" fill="#7d7d7d" font-weight="bold" textLength="56" lengthAdjust="spacingAndGlyphs" >To SDMMC (MHz)</text>
<text x="442.7" y="459.4" font-size="8" fill="#7d7d7d" font-weight="bold" textLength="50" lengthAdjust="spacingAndGlyphs" >SAI1 Clock Mux</text>
<text x="437.7" y="473.5" font-size="8" fill="#8c8690" textLength="26" lengthAdjust="spacingAndGlyphs" >PLLSAIQ</text>
<text x="437.7" y="501" font-size="8" fill="#8c8690" textLength="26" lengthAdjust="spacingAndGlyphs" >PLLI2SQ</text>
<text x="437.7" y="520.5" font-size="8" fill="#8c8690" textLength="30" lengthAdjust="spacingAndGlyphs" >I2S_CKIN</text>
<polyline points="437,482.5 463.5,482.5" fill="none" stroke="#4a4a4a" stroke-width="1" />
<polygon points="467.5,482.5 461.2,479.8 461.2,485.2" fill="#333"/>
<polyline points="437,506.5 463.5,506.5" fill="none" stroke="#4a4a4a" stroke-width="1" />
<polygon points="467.5,506.5 461.2,503.8 461.2,509.2" fill="#333"/>
<polyline points="437,529.5 463.5,529.5" fill="none" stroke="#4a4a4a" stroke-width="1" />
<polygon points="467.5,529.5 461.2,526.8 461.2,532.2" fill="#333"/>
<polygon points="468.5,468 484,479 484,533 468.5,543" fill="url(#mg)" stroke="#747474" stroke-width="0.9"/>
<circle cx="476" cy="481.5" r="4" fill="url(#rg)" stroke="#8e8e8e" stroke-width="0.8"/>
<circle cx="476" cy="481.5" r="2.1" fill="#5a779e"/>
<circle cx="476" cy="506" r="4" fill="url(#rg)" stroke="#8e8e8e" stroke-width="0.8"/>
<circle cx="476" cy="529.8" r="4" fill="url(#rg)" stroke="#8e8e8e" stroke-width="0.8"/>
<polyline points="484,506.5 562,506.5" fill="none" stroke="#555" stroke-width="1" />
<polyline points="556,506.5 563,506.5" fill="none" stroke="#4a4a4a" stroke-width="1" />
<polygon points="567,506.5 560.7,503.8 560.7,509.2" fill="#333"/>
<rect x="570.5" y="497.5" width="40" height="16" fill="#fff" stroke="#b3cfee" stroke-width="1" />
<text x="590.5" y="507.7" font-size="8" fill="#a9c6e6" text-anchor="middle" >192</text>
<text x="611" y="505.5" font-size="8" fill="#7d7d7d" font-weight="bold" textLength="47" lengthAdjust="spacingAndGlyphs" >To SAI1 (MHz)</text>
<text x="442.7" y="555.4" font-size="8" fill="#7d7d7d" font-weight="bold" textLength="50" lengthAdjust="spacingAndGlyphs" >SAI2 Clock Mux</text>
<text x="437.7" y="569.5" font-size="8" fill="#8c8690" textLength="26" lengthAdjust="spacingAndGlyphs" >PLLSAIQ</text>
<text x="437.7" y="595.5" font-size="8" fill="#8c8690" textLength="26" lengthAdjust="spacingAndGlyphs" >PLLI2SQ</text>
<text x="437.7" y="615.5" font-size="8" fill="#8c8690" textLength="30" lengthAdjust="spacingAndGlyphs" >I2S_CKIN</text>
<polyline points="437,578.5 463.5,578.5" fill="none" stroke="#4a4a4a" stroke-width="1" />
<polygon points="467.5,578.5 461.2,575.8 461.2,581.2" fill="#333"/>
<polyline points="437,602.5 463.5,602.5" fill="none" stroke="#999" stroke-width="1.3" />
<polygon points="467.5,602.5 461.2,599.8 461.2,605.2" fill="#333"/>
<polyline points="437,625.5 463.5,625.5" fill="none" stroke="#4a4a4a" stroke-width="1" />
<polygon points="467.5,625.5 461.2,622.8 461.2,628.2" fill="#333"/>
<polygon points="468.5,564.5 484,576 484,629.5 468.5,640" fill="url(#mg)" stroke="#747474" stroke-width="0.9"/>
<circle cx="476" cy="578" r="4" fill="url(#rg)" stroke="#8e8e8e" stroke-width="0.8"/>
<circle cx="476" cy="578" r="2.1" fill="#5a779e"/>
<circle cx="476" cy="602.5" r="4" fill="url(#rg)" stroke="#8e8e8e" stroke-width="0.8"/>
<circle cx="476" cy="626.5" r="4" fill="url(#rg)" stroke="#8e8e8e" stroke-width="0.8"/>
<polyline points="484,603.5 562,603.5" fill="none" stroke="#555" stroke-width="1" />
<polyline points="556,603.5 563,603.5" fill="none" stroke="#4a4a4a" stroke-width="1" />
<polygon points="567,603.5 560.7,600.8 560.7,606.2" fill="#333"/>
<rect x="570.5" y="596.5" width="40" height="16" fill="#fff" stroke="#b3cfee" stroke-width="1" />
<text x="590.5" y="606.7" font-size="8" fill="#a9c6e6" text-anchor="middle" >192</text>
<text x="611" y="604.3" font-size="8" fill="#7d7d7d" font-weight="bold" textLength="47" lengthAdjust="spacingAndGlyphs" >To SAI2 (MHz)</text>
<text x="500.5" y="322.4" font-size="8" fill="#7d7d7d" font-weight="bold" textLength="50" lengthAdjust="spacingAndGlyphs" >I2C1 Clock Mux</text>
<text x="503" y="337.5" font-size="8" fill="#8c8690" textLength="20" lengthAdjust="spacingAndGlyphs" >PCLK1</text>
<text x="503" y="361.5" font-size="8" fill="#8c8690" textLength="25" lengthAdjust="spacingAndGlyphs" >SYSCLK</text>
<text x="503" y="385.5" font-size="8" fill="#8c8690" textLength="11" lengthAdjust="spacingAndGlyphs" >HSI</text>
<polygon points="527.5,330 543.5,340.5 543.5,394 527.5,404.5" fill="url(#mg)" stroke="#747474" stroke-width="0.9"/>
<polyline points="503,343.5 523.5,343.5" fill="none" stroke="#4a4a4a" stroke-width="1" />
<polygon points="527.5,343.5 521.2,340.8 521.2,346.2" fill="#333"/>
<polyline points="503,367.5 523.5,367.5" fill="none" stroke="#4a4a4a" stroke-width="1" />
<polygon points="527.5,367.5 521.2,364.8 521.2,370.2" fill="#333"/>
<polyline points="503,390.5 523.5,390.5" fill="none" stroke="#4a4a4a" stroke-width="1" />
<polygon points="527.5,390.5 521.2,387.8 521.2,393.2" fill="#333"/>
<circle cx="534.5" cy="342" r="4" fill="url(#rg)" stroke="#8e8e8e" stroke-width="0.8"/>
<circle cx="534.5" cy="342" r="2.1" fill="#5a779e"/>
<circle cx="534.5" cy="367" r="4" fill="url(#rg)" stroke="#8e8e8e" stroke-width="0.8"/>
<circle cx="534.5" cy="391" r="4" fill="url(#rg)" stroke="#8e8e8e" stroke-width="0.8"/>
<polyline points="544,367.5 562,367.5" fill="none" stroke="#555" stroke-width="1" />
<polyline points="556,367.5 563,367.5" fill="none" stroke="#4a4a4a" stroke-width="1" />
<polygon points="567,367.5 560.7,364.8 560.7,370.2" fill="#333"/>
<rect x="570.5" y="360.5" width="40" height="15" fill="#fff" stroke="#b3cfee" stroke-width="1" />
<text x="590.5" y="370.2" font-size="8" fill="#a9c6e6" text-anchor="middle" >54</text>
<text x="611" y="369.3" font-size="8" fill="#7d7d7d" font-weight="bold" textLength="47" lengthAdjust="spacingAndGlyphs" >To I2C1 (MHz)</text>
<text x="500.5" y="418.4" font-size="8" fill="#7d7d7d" font-weight="bold" textLength="50" lengthAdjust="spacingAndGlyphs" >I2C2 Clock Mux</text>
<text x="503" y="433.8" font-size="8" fill="#8c8690" textLength="20" lengthAdjust="spacingAndGlyphs" >PCLK1</text>
<text x="503" y="457.2" font-size="8" fill="#8c8690" textLength="25" lengthAdjust="spacingAndGlyphs" >SYSCLK</text>
<text x="503" y="481" font-size="8" fill="#8c8690" textLength="11" lengthAdjust="spacingAndGlyphs" >HSI</text>
<polygon points="527.5,427 543.5,437 543.5,491 527.5,501.5" fill="url(#mg)" stroke="#747474" stroke-width="0.9"/>
<polyline points="503,441.5 523.5,441.5" fill="none" stroke="#4a4a4a" stroke-width="1" />
<polygon points="527.5,441.5 521.2,438.8 521.2,444.2" fill="#333"/>
<polyline points="503,464.5 523.5,464.5" fill="none" stroke="#4a4a4a" stroke-width="1" />
<polygon points="527.5,464.5 521.2,461.8 521.2,467.2" fill="#333"/>
<polyline points="503,488.5 523.5,488.5" fill="none" stroke="#4a4a4a" stroke-width="1" />
<polygon points="527.5,488.5 521.2,485.8 521.2,491.2" fill="#333"/>
<circle cx="534.5" cy="439.5" r="4" fill="url(#rg)" stroke="#8e8e8e" stroke-width="0.8"/>
<circle cx="534.5" cy="439.5" r="2.1" fill="#5a779e"/>
<circle cx="534.5" cy="464" r="4" fill="url(#rg)" stroke="#8e8e8e" stroke-width="0.8"/>
<circle cx="534.5" cy="488" r="4" fill="url(#rg)" stroke="#8e8e8e" stroke-width="0.8"/>
<polyline points="544,464.5 562,464.5" fill="none" stroke="#555" stroke-width="1" />
<polyline points="556,464.5 563,464.5" fill="none" stroke="#4a4a4a" stroke-width="1" />
<polygon points="567,464.5 560.7,461.8 560.7,467.2" fill="#333"/>
<rect x="570.5" y="458.5" width="40" height="15" fill="#fff" stroke="#b3cfee" stroke-width="1" />
<text x="590.5" y="468.2" font-size="8" fill="#a9c6e6" text-anchor="middle" >54</text>
<text x="611" y="464.8" font-size="8" fill="#7d7d7d" font-weight="bold" textLength="47" lengthAdjust="spacingAndGlyphs" >To I2C2 (MHz)</text>
<text x="500.5" y="514.4" font-size="8" fill="#7d7d7d" font-weight="bold" textLength="50" lengthAdjust="spacingAndGlyphs" >I2C3 Clock Mux</text>
<text x="503" y="529" font-size="8" fill="#8c8690" textLength="20" lengthAdjust="spacingAndGlyphs" >PCLK1</text>
<text x="503" y="553.2" font-size="8" fill="#8c8690" textLength="25" lengthAdjust="spacingAndGlyphs" >SYSCLK</text>
<text x="503" y="576.7" font-size="8" fill="#8c8690" textLength="11" lengthAdjust="spacingAndGlyphs" >HSI</text>
<polygon points="527.5,523 543.5,534 543.5,587 527.5,597" fill="url(#mg)" stroke="#747474" stroke-width="0.9"/>
<polyline points="503,538 523.5,538" fill="none" stroke="#4a4a4a" stroke-width="1" />
<polygon points="527.5,538 521.2,535.3 521.2,540.7" fill="#333"/>
<polyline points="503,561.5 523.5,561.5" fill="none" stroke="#4a4a4a" stroke-width="1" />
<polygon points="527.5,561.5 521.2,558.8 521.2,564.2" fill="#333"/>
<polyline points="503,585.3 523.5,585.3" fill="none" stroke="#4a4a4a" stroke-width="1" />
<polygon points="527.5,585.3 521.2,582.6 521.2,588" fill="#333"/>
<circle cx="534.5" cy="536.5" r="4" fill="url(#rg)" stroke="#8e8e8e" stroke-width="0.8"/>
<circle cx="534.5" cy="536.5" r="2.1" fill="#5a779e"/>
<circle cx="534.5" cy="560.7" r="4" fill="url(#rg)" stroke="#8e8e8e" stroke-width="0.8"/>
<circle cx="534.5" cy="585.3" r="4" fill="url(#rg)" stroke="#8e8e8e" stroke-width="0.8"/>
<polyline points="544,561.5 562,561.5" fill="none" stroke="#555" stroke-width="1" />
<polyline points="556,561.5 563,561.5" fill="none" stroke="#4a4a4a" stroke-width="1" />
<polygon points="567,561.5 560.7,558.8 560.7,564.2" fill="#333"/>
<rect x="570.5" y="552.5" width="40" height="16" fill="#fff" stroke="#b3cfee" stroke-width="1" />
<text x="590.5" y="562.7" font-size="8" fill="#a9c6e6" text-anchor="middle" >54</text>
<text x="611" y="563.3" font-size="8" fill="#7d7d7d" font-weight="bold" textLength="47" lengthAdjust="spacingAndGlyphs" >To I2C3 (MHz)</text>
<text x="500.5" y="613.2" font-size="8" fill="#7d7d7d" font-weight="bold" textLength="50" lengthAdjust="spacingAndGlyphs" >I2C4 Clock Mux</text>
<text x="503" y="625.5" font-size="8" fill="#8c8690" textLength="20" lengthAdjust="spacingAndGlyphs" >PCLK1</text>
<text x="503" y="649.5" font-size="8" fill="#8c8690" textLength="25" lengthAdjust="spacingAndGlyphs" >SYSCLK</text>
<polygon points="527.5,619.5 543.5,630 543.5,684 527.5,694" fill="url(#mg)" stroke="#747474" stroke-width="0.9"/>
<polyline points="503,634.5 523.5,634.5" fill="none" stroke="#4a4a4a" stroke-width="1" />
<polygon points="527.5,634.5 521.2,631.8 521.2,637.2" fill="#333"/>
<polyline points="503,657.5 523.5,657.5" fill="none" stroke="#4a4a4a" stroke-width="1" />
<polygon points="527.5,657.5 521.2,654.8 521.2,660.2" fill="#333"/>
<circle cx="534.5" cy="632.7" r="4" fill="url(#rg)" stroke="#8e8e8e" stroke-width="0.8"/>
<circle cx="534.5" cy="632.7" r="2.1" fill="#5a779e"/>
<circle cx="534.5" cy="656.5" r="4" fill="url(#rg)" stroke="#8e8e8e" stroke-width="0.8"/>
<polyline points="544,658 562,658" fill="none" stroke="#555" stroke-width="1" />
<polyline points="556,658 563,658" fill="none" stroke="#4a4a4a" stroke-width="1" />
<polygon points="567,658 560.7,655.3 560.7,660.7" fill="#333"/>
<rect x="570.5" y="650.5" width="40" height="15" fill="#fff" stroke="#b3cfee" stroke-width="1" />
<text x="590.5" y="660.2" font-size="8" fill="#a9c6e6" text-anchor="middle" >54</text>
<text x="611" y="660.2" font-size="8" fill="#7d7d7d" font-weight="bold" textLength="47" lengthAdjust="spacingAndGlyphs" >To I2C4 (MHz)</text>
<text x="704.5" y="268.4" font-size="8" fill="#7d7d7d" font-weight="bold" textLength="61.5" lengthAdjust="spacingAndGlyphs" >USART2 Clock Mux</text>
<text x="712.8" y="281.5" font-size="8" fill="#8c8690" textLength="20.5" lengthAdjust="spacingAndGlyphs" >PCLK1</text>
<text x="712.8" y="298.5" font-size="8" fill="#8c8690" textLength="26" lengthAdjust="spacingAndGlyphs" >SYSCLK</text>
<text x="712.8" y="315.5" font-size="8" fill="#8c8690" textLength="12" lengthAdjust="spacingAndGlyphs" >HSI</text>
<text x="712.8" y="332" font-size="8" fill="#8c8690" textLength="12" lengthAdjust="spacingAndGlyphs" >LSE</text>
<polygon points="738.5,275 754.4,285.5 754.4,339.5 738.5,349.5" fill="url(#mg)" stroke="#747474" stroke-width="0.9"/>
<polyline points="709,286.5 734,286.5" fill="none" stroke="#4a4a4a" stroke-width="1" />
<polygon points="738,286.5 731.7,283.8 731.7,289.2" fill="#333"/>
<polyline points="709,303.5 734,303.5" fill="none" stroke="#4a4a4a" stroke-width="1" />
<polygon points="738,303.5 731.7,300.8 731.7,306.2" fill="#333"/>
<polyline points="709,319.5 734,319.5" fill="none" stroke="#4a4a4a" stroke-width="1" />
<polygon points="738,319.5 731.7,316.8 731.7,322.2" fill="#333"/>
<polyline points="709,336.5 734,336.5" fill="none" stroke="#4a4a4a" stroke-width="1" />
<polygon points="738,336.5 731.7,333.8 731.7,339.2" fill="#333"/>
<circle cx="744" cy="286" r="4" fill="url(#rg)" stroke="#8e8e8e" stroke-width="0.8"/>
<circle cx="744" cy="286" r="2.1" fill="#5a779e"/>
<circle cx="744" cy="302.5" r="4" fill="url(#rg)" stroke="#8e8e8e" stroke-width="0.8"/>
<circle cx="744" cy="319" r="4" fill="url(#rg)" stroke="#8e8e8e" stroke-width="0.8"/>
<circle cx="744" cy="336" r="4" fill="url(#rg)" stroke="#8e8e8e" stroke-width="0.8"/>
<polyline points="754.5,313 852,313" fill="none" stroke="#999" stroke-width="1.3" />
<polyline points="848,313 853.5,313" fill="none" stroke="#888" stroke-width="1" />
<polygon points="857.5,313 851.2,310.3 851.2,315.7" fill="#333"/>
<text x="704.5" y="363.9" font-size="8" fill="#7d7d7d" font-weight="bold" textLength="61.5" lengthAdjust="spacingAndGlyphs" >USART6 Clock Mux</text>
<text x="712.8" y="377.5" font-size="8" fill="#8c8690" textLength="20.5" lengthAdjust="spacingAndGlyphs" >PCLK2</text>
<text x="712.8" y="394.5" font-size="8" fill="#8c8690" textLength="26" lengthAdjust="spacingAndGlyphs" >SYSCLK</text>
<text x="712.8" y="411.5" font-size="8" fill="#8c8690" textLength="12" lengthAdjust="spacingAndGlyphs" >HSI</text>
<text x="712.8" y="428.5" font-size="8" fill="#8c8690" textLength="12" lengthAdjust="spacingAndGlyphs" >LSE</text>
<polygon points="738.5,371 754.4,382 754.4,434.5 738.5,446" fill="url(#mg)" stroke="#747474" stroke-width="0.9"/>
<polyline points="709,384.5 734,384.5" fill="none" stroke="#4a4a4a" stroke-width="1" />
<polygon points="738,384.5 731.7,381.8 731.7,387.2" fill="#333"/>
<polyline points="709,400.5 734,400.5" fill="none" stroke="#4a4a4a" stroke-width="1" />
<polygon points="738,400.5 731.7,397.8 731.7,403.2" fill="#333"/>
<polyline points="709,417.5 734,417.5" fill="none" stroke="#4a4a4a" stroke-width="1" />
<polygon points="738,417.5 731.7,414.8 731.7,420.2" fill="#333"/>
<polyline points="709,434.5 734,434.5" fill="none" stroke="#4a4a4a" stroke-width="1" />
<polygon points="738,434.5 731.7,431.8 731.7,437.2" fill="#333"/>
<circle cx="744" cy="383" r="4" fill="url(#rg)" stroke="#8e8e8e" stroke-width="0.8"/>
<circle cx="744" cy="383" r="2.1" fill="#5a779e"/>
<circle cx="744" cy="399.5" r="4" fill="url(#rg)" stroke="#8e8e8e" stroke-width="0.8"/>
<circle cx="744" cy="416.5" r="4" fill="url(#rg)" stroke="#8e8e8e" stroke-width="0.8"/>
<circle cx="744" cy="433" r="4" fill="url(#rg)" stroke="#8e8e8e" stroke-width="0.8"/>
<polyline points="754.5,409.5 852,409.5" fill="none" stroke="#666" stroke-width="1" />
<polyline points="848,409.5 853.5,409.5" fill="none" stroke="#4a4a4a" stroke-width="1" />
<polygon points="857.5,409.5 851.2,406.8 851.2,412.2" fill="#333"/>
<text x="704.5" y="459.3" font-size="8" fill="#7d7d7d" font-weight="bold" textLength="57.5" lengthAdjust="spacingAndGlyphs" >UART5 Clock Mux</text>
<text x="712.8" y="472.5" font-size="8" fill="#8c8690" textLength="20.5" lengthAdjust="spacingAndGlyphs" >PCLK1</text>
<text x="712.8" y="489.5" font-size="8" fill="#8c8690" textLength="26" lengthAdjust="spacingAndGlyphs" >SYSCLK</text>
<text x="712.8" y="506.5" font-size="8" fill="#8c8690" textLength="12" lengthAdjust="spacingAndGlyphs" >HSI</text>
<text x="712.8" y="523.5" font-size="8" fill="#8c8690" textLength="12" lengthAdjust="spacingAndGlyphs" >LSE</text>
<polygon points="738.5,468 754.4,479 754.4,532 738.5,542.5" fill="url(#mg)" stroke="#747474" stroke-width="0.9"/>
<polyline points="709,480.5 734,480.5" fill="none" stroke="#4a4a4a" stroke-width="1" />
<polygon points="738,480.5 731.7,477.8 731.7,483.2" fill="#333"/>
<polyline points="709,497.5 734,497.5" fill="none" stroke="#4a4a4a" stroke-width="1" />
<polygon points="738,497.5 731.7,494.8 731.7,500.2" fill="#333"/>
<polyline points="709,513.7 734,513.7" fill="none" stroke="#4a4a4a" stroke-width="1" />
<polygon points="738,513.7 731.7,511 731.7,516.4" fill="#333"/>
<polyline points="709,531.5 734,531.5" fill="none" stroke="#4a4a4a" stroke-width="1" />
<polygon points="738,531.5 731.7,528.8 731.7,534.2" fill="#333"/>
<circle cx="744" cy="480" r="4" fill="url(#rg)" stroke="#8e8e8e" stroke-width="0.8"/>
<circle cx="744" cy="480" r="2.1" fill="#5a779e"/>
<circle cx="744" cy="497.5" r="4" fill="url(#rg)" stroke="#8e8e8e" stroke-width="0.8"/>
<circle cx="744" cy="514.5" r="4" fill="url(#rg)" stroke="#8e8e8e" stroke-width="0.8"/>
<circle cx="744" cy="531" r="4" fill="url(#rg)" stroke="#8e8e8e" stroke-width="0.8"/>
<polyline points="754.5,506 852,506" fill="none" stroke="#999" stroke-width="1.3" />
<polyline points="848,506 853.5,506" fill="none" stroke="#888" stroke-width="1" />
<polygon points="857.5,506 851.2,503.3 851.2,508.7" fill="#333"/>
<text x="704.5" y="555.4" font-size="8" fill="#7d7d7d" font-weight="bold" textLength="57.5" lengthAdjust="spacingAndGlyphs" >UART8 Clock Mux</text>
<text x="712.8" y="567.5" font-size="8" fill="#8c8690" textLength="20.5" lengthAdjust="spacingAndGlyphs" >PCLK1</text>
<text x="712.8" y="584.5" font-size="8" fill="#8c8690" textLength="26" lengthAdjust="spacingAndGlyphs" >SYSCLK</text>
<text x="712.8" y="601.5" font-size="8" fill="#8c8690" textLength="12" lengthAdjust="spacingAndGlyphs" >HSI</text>
<text x="712.8" y="618.5" font-size="8" fill="#8c8690" textLength="12" lengthAdjust="spacingAndGlyphs" >LSE</text>
<polygon points="738.5,564 754.4,574.5 754.4,629 738.5,639.5" fill="url(#mg)" stroke="#747474" stroke-width="0.9"/>
<polyline points="709,576.5 734,576.5" fill="none" stroke="#4a4a4a" stroke-width="1" />
<polygon points="738,576.5 731.7,573.8 731.7,579.2" fill="#333"/>
<polyline points="709,592.5 734,592.5" fill="none" stroke="#4a4a4a" stroke-width="1" />
<polygon points="738,592.5 731.7,589.8 731.7,595.2" fill="#333"/>
<polyline points="709,609.5 734,609.5" fill="none" stroke="#4a4a4a" stroke-width="1" />
<polygon points="738,609.5 731.7,606.8 731.7,612.2" fill="#333"/>
<polyline points="709,626.5 734,626.5" fill="none" stroke="#4a4a4a" stroke-width="1" />
<polygon points="738,626.5 731.7,623.8 731.7,629.2" fill="#333"/>
<circle cx="744" cy="575" r="4" fill="url(#rg)" stroke="#8e8e8e" stroke-width="0.8"/>
<circle cx="744" cy="575" r="2.1" fill="#5a779e"/>
<circle cx="744" cy="592" r="4" fill="url(#rg)" stroke="#8e8e8e" stroke-width="0.8"/>
<circle cx="744" cy="609" r="4" fill="url(#rg)" stroke="#8e8e8e" stroke-width="0.8"/>
<circle cx="744" cy="626" r="4" fill="url(#rg)" stroke="#8e8e8e" stroke-width="0.8"/>
<polyline points="754.5,602.5 852,602.5" fill="none" stroke="#444" stroke-width="1" />
<polyline points="848,602.5 853.5,602.5" fill="none" stroke="#4a4a4a" stroke-width="1" />
<polygon points="857.5,602.5 851.2,599.8 851.2,605.2" fill="#333"/>
<text x="786.5" y="227.4" font-size="8" fill="#7d7d7d" font-weight="bold" textLength="62" lengthAdjust="spacingAndGlyphs" >USART1 Clock Mux</text>
<text x="794" y="239.5" font-size="8" fill="#8c8690" textLength="20.5" lengthAdjust="spacingAndGlyphs" >PCLK2</text>
<text x="794" y="256.5" font-size="8" fill="#8c8690" textLength="26" lengthAdjust="spacingAndGlyphs" >SYSCLK</text>
<text x="794" y="273.5" font-size="8" fill="#8c8690" textLength="12" lengthAdjust="spacingAndGlyphs" >HSI</text>
<text x="794" y="290.5" font-size="8" fill="#8c8690" textLength="12" lengthAdjust="spacingAndGlyphs" >LSE</text>
<polygon points="818.5,232 834.4,243 834.4,296 818.5,307" fill="url(#mg)" stroke="#747474" stroke-width="0.9"/>
<polyline points="790,244.5 814,244.5" fill="none" stroke="#4a4a4a" stroke-width="1" />
<polygon points="818,244.5 811.7,241.8 811.7,247.2" fill="#333"/>
<polyline points="790,261.5 814,261.5" fill="none" stroke="#4a4a4a" stroke-width="1" />
<polygon points="818,261.5 811.7,258.8 811.7,264.2" fill="#333"/>
<polyline points="790,277.5 814,277.5" fill="none" stroke="#4a4a4a" stroke-width="1" />
<polygon points="818,277.5 811.7,274.8 811.7,280.2" fill="#333"/>
<polyline points="790,295.5 814,295.5" fill="none" stroke="#4a4a4a" stroke-width="1" />
<polygon points="818,295.5 811.7,292.8 811.7,298.2" fill="#333"/>
<circle cx="824" cy="243" r="4" fill="url(#rg)" stroke="#8e8e8e" stroke-width="0.8"/>
<circle cx="824" cy="243" r="2.1" fill="#5a779e"/>
<circle cx="824" cy="260" r="4" fill="url(#rg)" stroke="#8e8e8e" stroke-width="0.8"/>
<circle cx="824" cy="277" r="4" fill="url(#rg)" stroke="#8e8e8e" stroke-width="0.8"/>
<circle cx="824" cy="294" r="4" fill="url(#rg)" stroke="#8e8e8e" stroke-width="0.8"/>
<polyline points="834.5,270.5 853.5,270.5" fill="none" stroke="#4a4a4a" stroke-width="1" />
<polygon points="857.5,270.5 851.2,267.8 851.2,273.2" fill="#333"/>
<text x="786.5" y="323.4" font-size="8" fill="#7d7d7d" font-weight="bold" textLength="62" lengthAdjust="spacingAndGlyphs" >USART3 Clock Mux</text>
<text x="794" y="336.4" font-size="8" fill="#8c8690" textLength="20.5" lengthAdjust="spacingAndGlyphs" >PCLK1</text>
<text x="794" y="353.9" font-size="8" fill="#8c8690" textLength="26" lengthAdjust="spacingAndGlyphs" >SYSCLK</text>
<text x="794" y="370.5" font-size="8" fill="#8c8690" textLength="12" lengthAdjust="spacingAndGlyphs" >HSI</text>
<text x="794" y="387.5" font-size="8" fill="#8c8690" textLength="12" lengthAdjust="spacingAndGlyphs" >LSE</text>
<polygon points="818.5,329 834.4,340 834.4,394.5 818.5,404.5" fill="url(#mg)" stroke="#747474" stroke-width="0.9"/>
<polyline points="790,341.8 814,341.8" fill="none" stroke="#4a4a4a" stroke-width="1" />
<polygon points="818,341.8 811.7,339.1 811.7,344.5" fill="#333"/>
<polyline points="790,358.5 814,358.5" fill="none" stroke="#4a4a4a" stroke-width="1" />
<polygon points="818,358.5 811.7,355.8 811.7,361.2" fill="#333"/>
<polyline points="790,375.5 814,375.5" fill="none" stroke="#4a4a4a" stroke-width="1" />
<polygon points="818,375.5 811.7,372.8 811.7,378.2" fill="#333"/>
<polyline points="790,392.5 814,392.5" fill="none" stroke="#4a4a4a" stroke-width="1" />
<polygon points="818,392.5 811.7,389.8 811.7,395.2" fill="#333"/>
<circle cx="824" cy="341" r="4" fill="url(#rg)" stroke="#8e8e8e" stroke-width="0.8"/>
<circle cx="824" cy="341" r="2.1" fill="#5a779e"/>
<circle cx="824" cy="358" r="4" fill="url(#rg)" stroke="#8e8e8e" stroke-width="0.8"/>
<circle cx="824" cy="375" r="4" fill="url(#rg)" stroke="#8e8e8e" stroke-width="0.8"/>
<circle cx="824" cy="392" r="4" fill="url(#rg)" stroke="#8e8e8e" stroke-width="0.8"/>
<polyline points="834.5,367.5 853.5,367.5" fill="none" stroke="#333" stroke-width="1" />
<polygon points="857.5,367.5 851.2,364.8 851.2,370.2" fill="#333"/>
<text x="786.5" y="418.6" font-size="8" fill="#7d7d7d" font-weight="bold" textLength="57" lengthAdjust="spacingAndGlyphs" >UART4 Clock Mux</text>
<text x="794" y="431.5" font-size="8" fill="#8c8690" textLength="20.5" lengthAdjust="spacingAndGlyphs" >PCLK1</text>
<text x="794" y="448.5" font-size="8" fill="#8c8690" textLength="26" lengthAdjust="spacingAndGlyphs" >SYSCLK</text>
<text x="794" y="465.5" font-size="8" fill="#8c8690" textLength="12" lengthAdjust="spacingAndGlyphs" >HSI</text>
<text x="794" y="482.5" font-size="8" fill="#8c8690" textLength="12" lengthAdjust="spacingAndGlyphs" >LSE</text>
<polygon points="818.5,426.5 834.4,437 834.4,491 818.5,501.5" fill="url(#mg)" stroke="#747474" stroke-width="0.9"/>
<polyline points="790,438.5 814,438.5" fill="none" stroke="#4a4a4a" stroke-width="1" />
<polygon points="818,438.5 811.7,435.8 811.7,441.2" fill="#333"/>
<polyline points="790,454.5 814,454.5" fill="none" stroke="#4a4a4a" stroke-width="1" />
<polygon points="818,454.5 811.7,451.8 811.7,457.2" fill="#333"/>
<polyline points="790,471.5 814,471.5" fill="none" stroke="#4a4a4a" stroke-width="1" />
<polygon points="818,471.5 811.7,468.8 811.7,474.2" fill="#333"/>
<polyline points="790,488.5 814,488.5" fill="none" stroke="#4a4a4a" stroke-width="1" />
<polygon points="818,488.5 811.7,485.8 811.7,491.2" fill="#333"/>
<circle cx="824" cy="438" r="4" fill="url(#rg)" stroke="#8e8e8e" stroke-width="0.8"/>
<circle cx="824" cy="438" r="2.1" fill="#5a779e"/>
<circle cx="824" cy="454.5" r="4" fill="url(#rg)" stroke="#8e8e8e" stroke-width="0.8"/>
<circle cx="824" cy="471.5" r="4" fill="url(#rg)" stroke="#8e8e8e" stroke-width="0.8"/>
<circle cx="824" cy="489" r="4" fill="url(#rg)" stroke="#8e8e8e" stroke-width="0.8"/>
<polyline points="834.5,464.5 853.5,464.5" fill="none" stroke="#4a4a4a" stroke-width="1" />
<polygon points="857.5,464.5 851.2,461.8 851.2,467.2" fill="#333"/>
<text x="786.5" y="514.4" font-size="8" fill="#7d7d7d" font-weight="bold" textLength="57" lengthAdjust="spacingAndGlyphs" >UART7 Clock Mux</text>
<text x="794" y="526.5" font-size="8" fill="#8c8690" textLength="20.5" lengthAdjust="spacingAndGlyphs" >PCLK1</text>
<text x="794" y="544.5" font-size="8" fill="#8c8690" textLength="26" lengthAdjust="spacingAndGlyphs" >SYSCLK</text>
<text x="794" y="561.5" font-size="8" fill="#8c8690" textLength="12" lengthAdjust="spacingAndGlyphs" >HSI</text>
<text x="794" y="577.5" font-size="8" fill="#8c8690" textLength="12" lengthAdjust="spacingAndGlyphs" >LSE</text>
<polygon points="818.5,523 834.4,533 834.4,587 818.5,597" fill="url(#mg)" stroke="#747474" stroke-width="0.9"/>
<polyline points="790,534.5 814,534.5" fill="none" stroke="#4a4a4a" stroke-width="1" />
<polygon points="818,534.5 811.7,531.8 811.7,537.2" fill="#333"/>
<polyline points="790,551.5 814,551.5" fill="none" stroke="#4a4a4a" stroke-width="1" />
<polygon points="818,551.5 811.7,548.8 811.7,554.2" fill="#333"/>
<polyline points="790,568.5 814,568.5" fill="none" stroke="#4a4a4a" stroke-width="1" />
<polygon points="818,568.5 811.7,565.8 811.7,571.2" fill="#333"/>
<polyline points="790,585.5 814,585.5" fill="none" stroke="#4a4a4a" stroke-width="1" />
<polygon points="818,585.5 811.7,582.8 811.7,588.2" fill="#333"/>
<circle cx="824" cy="534" r="4" fill="url(#rg)" stroke="#8e8e8e" stroke-width="0.8"/>
<circle cx="824" cy="534" r="2.1" fill="#5a779e"/>
<circle cx="824" cy="551" r="4" fill="url(#rg)" stroke="#8e8e8e" stroke-width="0.8"/>
<circle cx="824" cy="568" r="4" fill="url(#rg)" stroke="#8e8e8e" stroke-width="0.8"/>
<circle cx="824" cy="584.5" r="4" fill="url(#rg)" stroke="#8e8e8e" stroke-width="0.8"/>
<polyline points="834.5,560.5 853.5,560.5" fill="none" stroke="#4a4a4a" stroke-width="1" />
<polygon points="857.5,560.5 851.2,557.8 851.2,563.2" fill="#333"/>
<text x="786.5" y="609.4" font-size="8" fill="#7d7d7d" font-weight="bold" textLength="58.5" lengthAdjust="spacingAndGlyphs" >LPTIM1 Clock Mux</text>
<text x="794" y="622.5" font-size="8" fill="#8c8690" textLength="20.5" lengthAdjust="spacingAndGlyphs" >PCLK1</text>
<text x="794" y="639.5" font-size="8" fill="#8c8690" textLength="11" lengthAdjust="spacingAndGlyphs" >LSI</text>
<text x="794" y="656.5" font-size="8" fill="#8c8690" textLength="12" lengthAdjust="spacingAndGlyphs" >HSI</text>
<polygon points="818.5,619 834.4,629.5 834.4,684 818.5,694" fill="url(#mg)" stroke="#747474" stroke-width="0.9"/>
<polyline points="790,631.5 814,631.5" fill="none" stroke="#4a4a4a" stroke-width="1" />
<polygon points="818,631.5 811.7,628.8 811.7,634.2" fill="#333"/>
<polyline points="790,648.5 814,648.5" fill="none" stroke="#4a4a4a" stroke-width="1" />
<polygon points="818,648.5 811.7,645.8 811.7,651.2" fill="#333"/>
<circle cx="824" cy="631" r="4" fill="url(#rg)" stroke="#8e8e8e" stroke-width="0.8"/>
<circle cx="824" cy="631" r="2.1" fill="#5a779e"/>
<circle cx="824" cy="648" r="4" fill="url(#rg)" stroke="#8e8e8e" stroke-width="0.8"/>
<polyline points="834.5,656.5 850.5,656.5" fill="none" stroke="#4a4a4a" stroke-width="1" />
<polygon points="854.5,656.5 848.2,653.8 848.2,659.2" fill="#333"/>
<rect x="858.5" y="262.5" width="40" height="16" fill="#fff" stroke="#b3cfee" stroke-width="1" />
<text x="878.5" y="272.7" font-size="8" fill="#a9c6e6" text-anchor="middle" >108</text>
<text x="899.2" y="273" font-size="8" fill="#7d7d7d" font-weight="bold" textLength="58" lengthAdjust="spacingAndGlyphs" >To USART1 (MHz)</text>
<rect x="858.5" y="304.5" width="40" height="16" fill="#fff" stroke="#b3cfee" stroke-width="1" />
<text x="878.5" y="314.7" font-size="8" fill="#a9c6e6" text-anchor="middle" >54</text>
<text x="899.2" y="314.6" font-size="8" fill="#7d7d7d" font-weight="bold" textLength="58" lengthAdjust="spacingAndGlyphs" >To USART2 (MHz)</text>
<rect x="858.5" y="359.5" width="40" height="16" fill="#fff" stroke="#b3cfee" stroke-width="1" />
<text x="878.5" y="369.7" font-size="8" fill="#a9c6e6" text-anchor="middle" >54</text>
<text x="899.2" y="369.3" font-size="8" fill="#7d7d7d" font-weight="bold" textLength="58" lengthAdjust="spacingAndGlyphs" >To USART3 (MHz)</text>
<rect x="858.5" y="402.5" width="40" height="16" fill="#fff" stroke="#b3cfee" stroke-width="1" />
<text x="878.5" y="412.7" font-size="8" fill="#a9c6e6" text-anchor="middle" >108</text>
<text x="899.2" y="410" font-size="8" fill="#7d7d7d" font-weight="bold" textLength="58" lengthAdjust="spacingAndGlyphs" >To USART6 (MHz)</text>
<rect x="858.5" y="456.5" width="40" height="16" fill="#fff" stroke="#b3cfee" stroke-width="1" />
<text x="878.5" y="466.7" font-size="8" fill="#a9c6e6" text-anchor="middle" >54</text>
<text x="899.2" y="464.8" font-size="8" fill="#7d7d7d" font-weight="bold" textLength="54" lengthAdjust="spacingAndGlyphs" >To UART4 (MHz)</text>
<rect x="858.5" y="497.5" width="40" height="16" fill="#fff" stroke="#b3cfee" stroke-width="1" />
<text x="878.5" y="507.7" font-size="8" fill="#a9c6e6" text-anchor="middle" >54</text>
<text x="899.2" y="506" font-size="8" fill="#7d7d7d" font-weight="bold" textLength="54" lengthAdjust="spacingAndGlyphs" >To UART5 (MHz)</text>
<rect x="858.5" y="554.5" width="40" height="15" fill="#fff" stroke="#b3cfee" stroke-width="1" />
<text x="878.5" y="564.2" font-size="8" fill="#a9c6e6" text-anchor="middle" >54</text>
<text x="899.2" y="563.8" font-size="8" fill="#7d7d7d" font-weight="bold" textLength="54" lengthAdjust="spacingAndGlyphs" >To UART7 (MHz)</text>
<rect x="858.5" y="595.5" width="40" height="15" fill="#fff" stroke="#b3cfee" stroke-width="1" />
<text x="878.5" y="605.2" font-size="8" fill="#a9c6e6" text-anchor="middle" >54</text>
<text x="899.2" y="604.3" font-size="8" fill="#7d7d7d" font-weight="bold" textLength="54" lengthAdjust="spacingAndGlyphs" >To UART8 (MHz)</text>
<rect x="858.5" y="648.5" width="40" height="16" fill="#fff" stroke="#b3cfee" stroke-width="1" />
<text x="878.5" y="658.7" font-size="8" fill="#a9c6e6" text-anchor="middle" >54</text>
<text x="899.2" y="659.1" font-size="8" fill="#7d7d7d" font-weight="bold" textLength="56" lengthAdjust="spacingAndGlyphs" >To LPTIM1 (MHz)</text>
<polyline points="131.5,518.5 368.5,518.5 368.5,659" fill="none" stroke="#555" stroke-width="1" />
<text x="231" y="541" font-size="8" fill="#7d7d7d" font-weight="bold" textLength="58" lengthAdjust="spacingAndGlyphs" >MCO1 source Mux</text>
<polygon points="243.5,563 260,553 260,633 243.5,622" fill="url(#mg2)" stroke="#747474" stroke-width="0.9"/>
<circle cx="251" cy="566.5" r="4" fill="url(#rg)" stroke="#8e8e8e" stroke-width="0.8"/>
<circle cx="251" cy="584" r="4" fill="url(#rg)" stroke="#8e8e8e" stroke-width="0.8"/>
<circle cx="251" cy="600.5" r="4" fill="url(#rg)" stroke="#8e8e8e" stroke-width="0.8"/>
<circle cx="251" cy="600.5" r="2.1" fill="#5a779e"/>
<circle cx="251" cy="618" r="4" fill="url(#rg)" stroke="#8e8e8e" stroke-width="0.8"/>
<text x="289" y="561" font-size="8" fill="#8c8690" textLength="12" lengthAdjust="spacingAndGlyphs" >LSE</text>
<text x="288" y="578" font-size="8" fill="#8c8690" textLength="13" lengthAdjust="spacingAndGlyphs" >HSE</text>
<text x="288" y="595" font-size="8" fill="#8c8690" textLength="11" lengthAdjust="spacingAndGlyphs" >HSI</text>
<text x="278.5" y="612.5" font-size="8" fill="#8c8690" textLength="23.5" lengthAdjust="spacingAndGlyphs" >PLLCLK</text>
<polyline points="303,566.5 264.5,566.5" fill="none" stroke="#333" stroke-width="1.2" />
<polygon points="260.5,566.5 266.8,563.8 266.8,569.2" fill="#333"/>
<polyline points="303,583.5 264.5,583.5" fill="none" stroke="#333" stroke-width="1.2" />
<polygon points="260.5,583.5 266.8,580.8 266.8,586.2" fill="#333"/>
<polyline points="303,600.5 264.5,600.5" fill="none" stroke="#333" stroke-width="1.2" />
<polygon points="260.5,600.5 266.8,597.8 266.8,603.2" fill="#333"/>
<polyline points="303,618.5 264.5,618.5" fill="none" stroke="#333" stroke-width="1.2" />
<polygon points="260.5,618.5 266.8,615.8 266.8,621.2" fill="#333"/>
<polyline points="244,593.5 235,593.5" fill="none" stroke="#4a4a4a" stroke-width="1" />
<polygon points="231,593.5 237.3,590.8 237.3,596.2" fill="#333"/>
<rect x="194.5" y="586.5" width="24" height="12.5" fill="#e9e9e9" stroke="#5f7fae" stroke-width="1" />
<rect x="218.5" y="586.5" width="12.5" height="12.5" fill="#ebebeb" stroke="#959595" stroke-width="1" />
<text x="206.5" y="595.05" font-size="8" fill="#b4c8e2" text-anchor="middle" >/ 1</text>
<polygon points="221.15,591.35 228.35,591.35 224.75,595.35" fill="#93bbe6"/>
<polyline points="194,593.5 189,593.5" fill="none" stroke="#4a4a4a" stroke-width="1" />
<polygon points="185,593.5 191.3,590.8 191.3,596.2" fill="#333"/>
<rect x="144.5" y="585.5" width="41" height="16" fill="#fff" stroke="#b3cfee" stroke-width="1" />
<text x="165" y="595.7" font-size="8" fill="#a9c6e6" text-anchor="middle" >8</text>
<polyline points="144,594.5 138,594.5" fill="none" stroke="#555" stroke-width="1" />
<polygon points="131.5,594.5 137.5,591.5 137.5,597.5" fill="#333"/>
<polygon points="136.5,594.5 142.5,591.5 142.5,597.5" fill="#333"/>
<rect x="127.5" y="592.5" width="4" height="4" fill="#fff" stroke="#707070" stroke-width="0.9" />
<text x="85" y="595" font-size="8" fill="#8c8690" textLength="40" lengthAdjust="spacingAndGlyphs" >(MHz) MCO1</text>
<text x="231" y="643" font-size="8" fill="#7d7d7d" font-weight="bold" textLength="58" lengthAdjust="spacingAndGlyphs" >MCO2 source Mux</text>
<polygon points="243.5,660 260,650 260,700 243.5,700" fill="url(#mg2)" stroke="#747474" stroke-width="0.9"/>
<text x="279" y="656" font-size="8" fill="#8c8690" textLength="25" lengthAdjust="spacingAndGlyphs" >SYSCLK</text>
<rect x="0" y="659" width="1024" height="4" fill="#c7daf0" />
<rect x="0" y="659" width="1024" height="1" fill="#9daab9" />
<rect x="0" y="662" width="1024" height="1" fill="#bccde2" />
</svg>
</body></html>
